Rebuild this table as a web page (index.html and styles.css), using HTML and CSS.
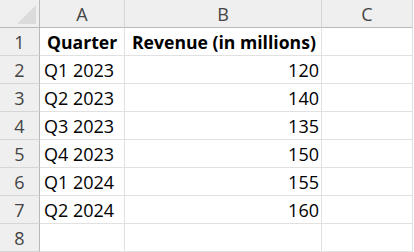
FILE: index.html
```html
<!DOCTYPE html>
<html>
<head>
<meta charset="utf-8">
<link rel="stylesheet" href="styles.css">
</head>
<body>
<div class="sheet">
  <div class="corner"><span class="tri"></span></div>
  <div class="colhead">A</div>
  <div class="colhead">B</div>
  <div class="colhead">C</div>

  <div class="rowhead">1</div>
  <div class="cell bold">Quarter</div>
  <div class="cell bold">Revenue (in millions)</div>
  <div class="cell"></div>

  <div class="rowhead">2</div>
  <div class="cell">Q1 2023</div>
  <div class="cell num">120</div>
  <div class="cell"></div>

  <div class="rowhead">3</div>
  <div class="cell">Q2 2023</div>
  <div class="cell num">140</div>
  <div class="cell"></div>

  <div class="rowhead">4</div>
  <div class="cell">Q3 2023</div>
  <div class="cell num">135</div>
  <div class="cell"></div>

  <div class="rowhead">5</div>
  <div class="cell">Q4 2023</div>
  <div class="cell num">150</div>
  <div class="cell"></div>

  <div class="rowhead">6</div>
  <div class="cell">Q1 2024</div>
  <div class="cell num">155</div>
  <div class="cell"></div>

  <div class="rowhead">7</div>
  <div class="cell">Q2 2024</div>
  <div class="cell num">160</div>
  <div class="cell"></div>

  <div class="rowhead">8</div>
  <div class="cell"></div>
  <div class="cell"></div>
  <div class="cell"></div>
</div>
</body>
</html>
```
FILE: styles.css
```css
html, body {
  margin: 0;
  padding: 0;
  background: #ffffff;
}
.sheet {
  display: grid;
  grid-template-columns: 40px 85px 197px 91px;
  grid-auto-rows: 28px;
  width: 414px;
  font-family: "Open Sans", "Liberation Sans", sans-serif;
  font-size: 18px;
  color: #000;
}
.corner, .colhead {
  background: #efefef;
  border-bottom: 1px solid #b9b9b9;
  box-sizing: border-box;
}
.corner {
  position: relative;
  border-right: 1px solid #b9b9b9;
}
.tri {
  position: absolute;
  right: 3px;
  bottom: 3px;
  width: 0;
  height: 0;
  border-left: 19px solid transparent;
  border-bottom: 19px solid #dbdbdb;
}
.colhead {
  border-right: 1px solid #d6d6d6;
  color: #444;
  font-size: 18px;
  display: flex;
  align-items: center;
  justify-content: center;
  padding-top: 1px;
}
.rowhead {
  background: #efefef;
  border-right: 1px solid #b9b9b9;
  border-bottom: 1px solid #d6d6d6;
  box-sizing: border-box;
  color: #444;
  font-size: 18px;
  display: flex;
  align-items: center;
  justify-content: center;
}
.cell {
  border-right: 1px solid #e1e1e1;
  border-bottom: 1px solid #e1e1e1;
  box-sizing: border-box;
  display: flex;
  align-items: flex-end;
  padding: 0 4px 1px 4px;
  white-space: nowrap;
  line-height: 24px;
}
.bold { font-weight: 700; font-size: 17.6px; justify-content: flex-start; padding-left: 7px; }
.num { justify-content: flex-end; padding-right: 2px; }
```
